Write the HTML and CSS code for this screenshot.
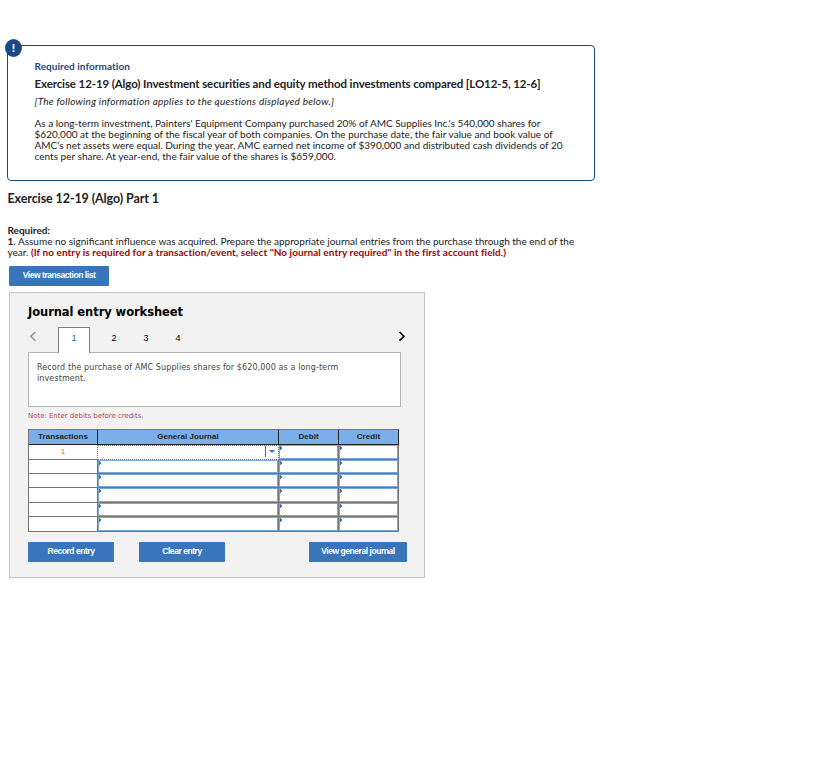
FILE: index.html
```html
<!DOCTYPE html>
<html lang="en">
<head>
    <meta charset="UTF-8">
    <meta name="viewport" content="width=device-width, initial-scale=1.0">
    <title>Exercise 12-19 (Algo) Part 1</title>
    <link rel="stylesheet" href="styles.css">
</head>
<body>

    <section class="info-box">
        <span class="info-badge">!</span>
        <h4 class="info-label">Required information</h4>
        <h3 class="info-title">Exercise 12-19 (Algo) Investment securities and equity method investments compared [LO12-5, 12-6]</h3>
        <p class="info-note">[The following information applies to the questions displayed below.]</p>
        <p class="info-text">
            As a long-term investment, Painters' Equipment Company purchased 20% of AMC Supplies Inc.'s 540,000 shares for<br>
            <span class="wide">$620,000 at the beginning of the fiscal year of both companies. On the purchase date, the fair value and book value of</span><br>
            AMC's net assets were equal. During the year, AMC earned net income of $390,000 and distributed cash dividends of 20<br>
            <span class="wide">cents per share. At year-end, the fair value of the shares is $659,000.</span>
        </p>
    </section>

    <h2 class="part-title">Exercise 12-19 (Algo) Part 1</h2>

    <div class="question">
        <b>Required:</b><br>
        <b>1.</b> Assume no significant influence was acquired. Prepare the appropriate journal entries from the purchase through the end of the<br>
        year. <b class="hint">(If no entry is required for a transaction/event, select "No journal entry required" in the first account field.)</b>
    </div>

    <button class="btn btn-list" type="button">View transaction list</button>

    <main class="worksheet">
        <h1>Journal entry worksheet</h1>

        <!-- Entry tabs -->
        <nav class="tabs">
            <svg class="arrow prev" width="8" height="11" viewBox="0 0 8 11"><path d="M6.3 1 L1.7 5.3 L6.3 9.6"/></svg>
            <a class="tab active">1</a>
            <a class="tab">2</a>
            <a class="tab">3</a>
            <a class="tab">4</a>
            <svg class="arrow next" width="8" height="11" viewBox="0 0 8 11"><path d="M1.5 1 L5.9 5.3 L1.5 9.6"/></svg>
        </nav>

        <div class="description">Record the purchase of AMC Supplies shares for $620,000 as a long-term<br>investment.</div>
        <p class="note">Note: Enter debits before credits.</p>

        <table class="journal">
            <colgroup>
                <col class="col-trans">
                <col class="col-account">
                <col class="col-amount">
                <col class="col-amount">
            </colgroup>
            <thead>
                <tr><th>Transactions</th><th>General Journal</th><th>Debit</th><th>Credit</th></tr>
            </thead>
            <tbody>
                <tr class="first tall"><td>1</td><td class="selected"><div class="dropdown"></div></td><td class="entry"></td><td class="entry"></td></tr>
                <tr><td></td><td class="entry"></td><td class="entry"></td><td class="entry"></td></tr>
                <tr><td></td><td class="entry"></td><td class="entry"></td><td class="entry"></td></tr>
                <tr class="tall"><td></td><td class="entry"></td><td class="entry"></td><td class="entry"></td></tr>
                <tr><td></td><td class="entry"></td><td class="entry"></td><td class="entry"></td></tr>
                <tr class="tall"><td></td><td class="entry"></td><td class="entry"></td><td class="entry"></td></tr>
            </tbody>
        </table>

        <div class="actions">
            <button class="btn" type="button">Record entry</button>
            <button class="btn" type="button">Clear entry</button>
            <button class="btn btn-journal" type="button">View general journal</button>
        </div>
    </main>

</body>
</html>
```

FILE: styles.css
```css
* {
    box-sizing: border-box;
}

body {
    font-family: "Lato", "Open Sans", sans-serif;
    background-color: #ffffff;
    margin: 0;
    padding: 45px 0 0 7px;
    color: #222;
    font-size: 10px;
    line-height: 11px;
}

h1, h2, h3, h4, p {
    margin: 0;
}

/* Required information box */
.info-box {
    position: relative;
    width: 588px;
    height: 136px;
    padding: 15px 0 0 26.5px;
    border: 1px solid #164b87;
    border-radius: 4px;
    white-space: nowrap;
}

.info-badge {
    position: absolute;
    left: -3px;
    top: -7px;
    width: 17px;
    height: 18px;
    border-radius: 50%;
    background-color: #164b87;
    color: #fff;
    font-size: 12px;
    font-weight: 900;
    line-height: 17px;
    text-align: center;
}

.info-label {
    color: #1b4b7f;
    line-height: 11px;
    letter-spacing: 0.05px;
}

.info-title {
    margin-top: 4px;
    font-size: 11.5px;
    line-height: 15px;
    letter-spacing: -0.11px;
}

.info-note {
    margin-top: 5px;
    font-style: italic;
    line-height: 11px;
    letter-spacing: 0.25px;
}

.info-text {
    margin-top: 11px;
}

.wide {
    letter-spacing: 0.02px;
}

.part-title {
    margin: 10px 0 0 0.5px;
    font-size: 12.5px;
    line-height: 15px;
    letter-spacing: -0.1px;
}

.question {
    margin: 19px 0 0 0.5px;
    white-space: nowrap;
}

.hint {
    color: #a60000;
    letter-spacing: 0.06px;
}

.btn {
    display: block;
    width: 86px;
    height: 20px;
    padding: 0 0 2px;
    border: none;
    border-radius: 1px;
    background-color: #3875ba;
    color: #fff;
    font-family: "Liberation Sans", Arial, sans-serif;
    font-size: 8.5px;
    font-weight: bold;
    letter-spacing: -0.45px;
    white-space: nowrap;
}

.btn-list {
    width: 100px;
    margin: 8px 0 0 2px;
}

/* Worksheet */
.worksheet {
    width: 416px;
    height: 286px;
    margin: 6px 0 0 2px;
    padding: 11px 17px 0 18px;
    border: 1px solid #c4c4c4;
    background-color: #f2f2f2;
}

.worksheet h1 {
    color: #000;
    font-family: "DejaVu Sans", Verdana, sans-serif;
    font-size: 11.5px;
    line-height: 16px;
    letter-spacing: -0.07px;
}

.tabs {
    display: flex;
    height: 26px;
    margin: 7px 0 -1px;
    position: relative;
    color: #000;
    font-family: "Liberation Sans", Arial, sans-serif;
    font-size: 9px;
}

.tab {
    width: 32px;
    padding-top: 6px;
    text-align: center;
}

.tab.active {
    margin: 0 8px 0 21px;
    padding-top: 5px;
    border: 1px solid #7d7d7d;
    border-bottom: none;
    background-color: #fff;
    color: #2a68a8;
}

.arrow {
    margin-top: 4px;
    fill: none;
    stroke: #999;
    stroke-width: 1.7;
}

.prev {
    margin-left: 1px;
}

.next {
    margin-left: auto;
    margin-right: 1px;
    stroke: #111;
}

.description {
    width: 373px;
    height: 55px;
    padding: 9px 8px;
    border: 1px solid #b3b3b3;
    background-color: #fff;
    color: #444;
    font-family: "DejaVu Sans", Verdana, sans-serif;
    font-size: 8px;
    line-height: 11px;
    letter-spacing: 0.11px;
    white-space: nowrap;
}

.note {
    margin-top: 4px;
    color: #b04a50;
    font-family: "DejaVu Sans", Verdana, sans-serif;
    font-size: 7px;
    line-height: 11px;
    letter-spacing: -0.03px;
}

/* Journal table */
.journal {
    width: 371px;
    margin-top: 7px;
    border-collapse: separate;
    border-spacing: 0;
    border: 1px solid #757575;
    border-width: 1px 0 0 1px;
    table-layout: fixed;
    background-color: #fff;
    font-family: "Liberation Sans", Arial, sans-serif;
    font-size: 8px;
    line-height: 9px;
    color: #222;
}

.col-trans {
    width: 69px;
}

.col-account {
    width: 181px;
}

.col-amount {
    width: 60px;
}

.journal th {
    height: 15px;
    padding: 0 0 2px;
    border: solid #222;
    border-width: 0 1px 1px 0;
    background-color: #7aaee8;
    letter-spacing: 0.05px;
}

.journal td {
    height: 14px;
    padding: 0;
    border: solid #757575;
    border-width: 0 1px 1px 0;
    text-align: center;
}

.journal .tall td {
    height: 15px;
}

.journal .first td:first-child {
    padding-bottom: 1px;
    border-right: 1px dotted #3875ba;
    color: #c77a2b;
}

.journal .first .selected {
    border: 1px dotted #3875ba;
    border-left: none;
}

/* small marker in the corner of an editable cell */
.entry {
    background:
        linear-gradient(#3875ba, #3875ba) 0 1px / 2px 4px no-repeat,
        linear-gradient(#3875ba, #3875ba) 2px 2px / 1px 2px no-repeat;
    box-shadow: inset 0 0 0 1px #7ba6d9;
}

.dropdown {
    display: flex;
    align-items: center;
    justify-content: center;
    width: 13px;
    height: 11px;
    margin: -2px 0 0 auto;
    border-left: 1px solid #3875ba;
}

.dropdown::after {
    content: "";
    border: solid transparent;
    border-width: 3px 3px 0;
    border-top-color: #3875ba;
}

.actions {
    display: flex;
    gap: 25px;
    margin-top: 10px;
}

.btn-journal {
    width: 98px;
    margin-left: 59px;
}
```
